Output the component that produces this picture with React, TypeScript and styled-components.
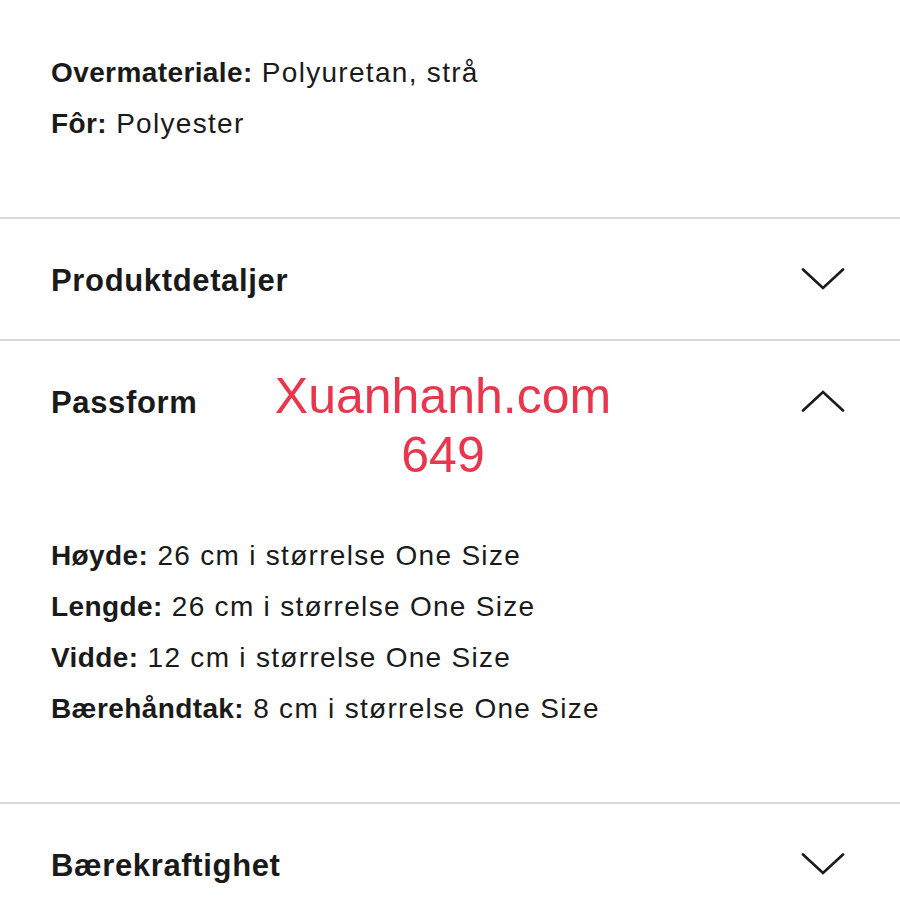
import React from "react";
import styled, { createGlobalStyle } from "styled-components";

const Global = createGlobalStyle`
  html, body { margin: 0; padding: 0; background: #ffffff; }
  body { font-family: "Liberation Sans", Arial, sans-serif; color: #1a1a1a; }
`;

const Page = styled.div`
  position: relative;
  width: 900px;
  height: 900px;
  overflow: hidden;
  background: #ffffff;
`;

const Section = styled.section<{ $divider?: boolean }>`
  border-top: ${(p) => (p.$divider ? "2px solid #d9d9d9" : "none")};
`;

const Header = styled.div`
  height: 120px;
  display: flex;
  align-items: center;
  justify-content: space-between;
  padding: 0 55px 0 51px;
`;

const Title = styled.h2`
  margin: 4px 0 0;
  font-family: "Liberation Sans", Arial, sans-serif;
  font-weight: 700;
  font-size: 31px;
  letter-spacing: 0.65px;
  color: #1a1a1a;
`;

const Body = styled.div<{ $top: number; $bottom: number }>`
  padding: ${(p) => p.$top}px 51px ${(p) => p.$bottom}px;
`;

const Line = styled.p`
  margin: 0;
  font-size: 28px;
  line-height: 51px;
  color: #1a1a1a;
  letter-spacing: 1.3px;
  white-space: nowrap;
`;

const Label = styled.strong`
  font-weight: 700;
  letter-spacing: 0.4px;
`;

const Watermark = styled.div`
  position: absolute;
  left: 243px;
  top: 367px;
  width: 400px;
  text-align: center;
  font-family: "Liberation Sans", Arial, sans-serif;
  font-size: 50px;
  line-height: 59px;
  color: #e8364d;
  pointer-events: none;
`;

const ChevronSvg = styled.svg`
  display: block;
  width: 44px;
  height: 22px;
`;

const Chevron = ({ up }: { up?: boolean }) => (
  <ChevronSvg viewBox="0 0 44 22" fill="none">
    <polyline
      points={up ? "2,20.5 22,2 42,20.5" : "2,1.5 22,20 42,1.5"}
      stroke="#1a1a1a"
      strokeWidth="2.6"
      strokeLinecap="round"
      strokeLinejoin="miter"
    />
  </ChevronSvg>
);

const Row = ({ label, value }: { label: string; value: string }) => (
  <Line>
    <Label>{label}</Label> {value}
  </Line>
);

export default function App() {
  return (
    <>
      <Global />
      <Page>
        <Section>
          <Body $top={47} $bottom={68}>
            <Row label="Overmateriale:" value="Polyuretan, strå" />
            <Row label="Fôr:" value="Polyester" />
          </Body>
        </Section>
        <Section $divider>
          <Header>
            <Title>Produktdetaljer</Title>
            <Chevron />
          </Header>
        </Section>
        <Section $divider>
          <Header>
            <Title>Passform</Title>
            <Chevron up />
          </Header>
          <Body $top={69} $bottom={68}>
            <Row label="Høyde:" value="26 cm i størrelse One Size" />
            <Row label="Lengde:" value="26 cm i størrelse One Size" />
            <Row label="Vidde:" value="12 cm i størrelse One Size" />
            <Row label="Bærehåndtak:" value="8 cm i størrelse One Size" />
          </Body>
        </Section>
        <Section $divider>
          <Header>
            <Title>Bærekraftighet</Title>
            <Chevron />
          </Header>
        </Section>
        <Watermark>
          Xuanhanh.com
          <br />
          649
        </Watermark>
      </Page>
    </>
  );
}
